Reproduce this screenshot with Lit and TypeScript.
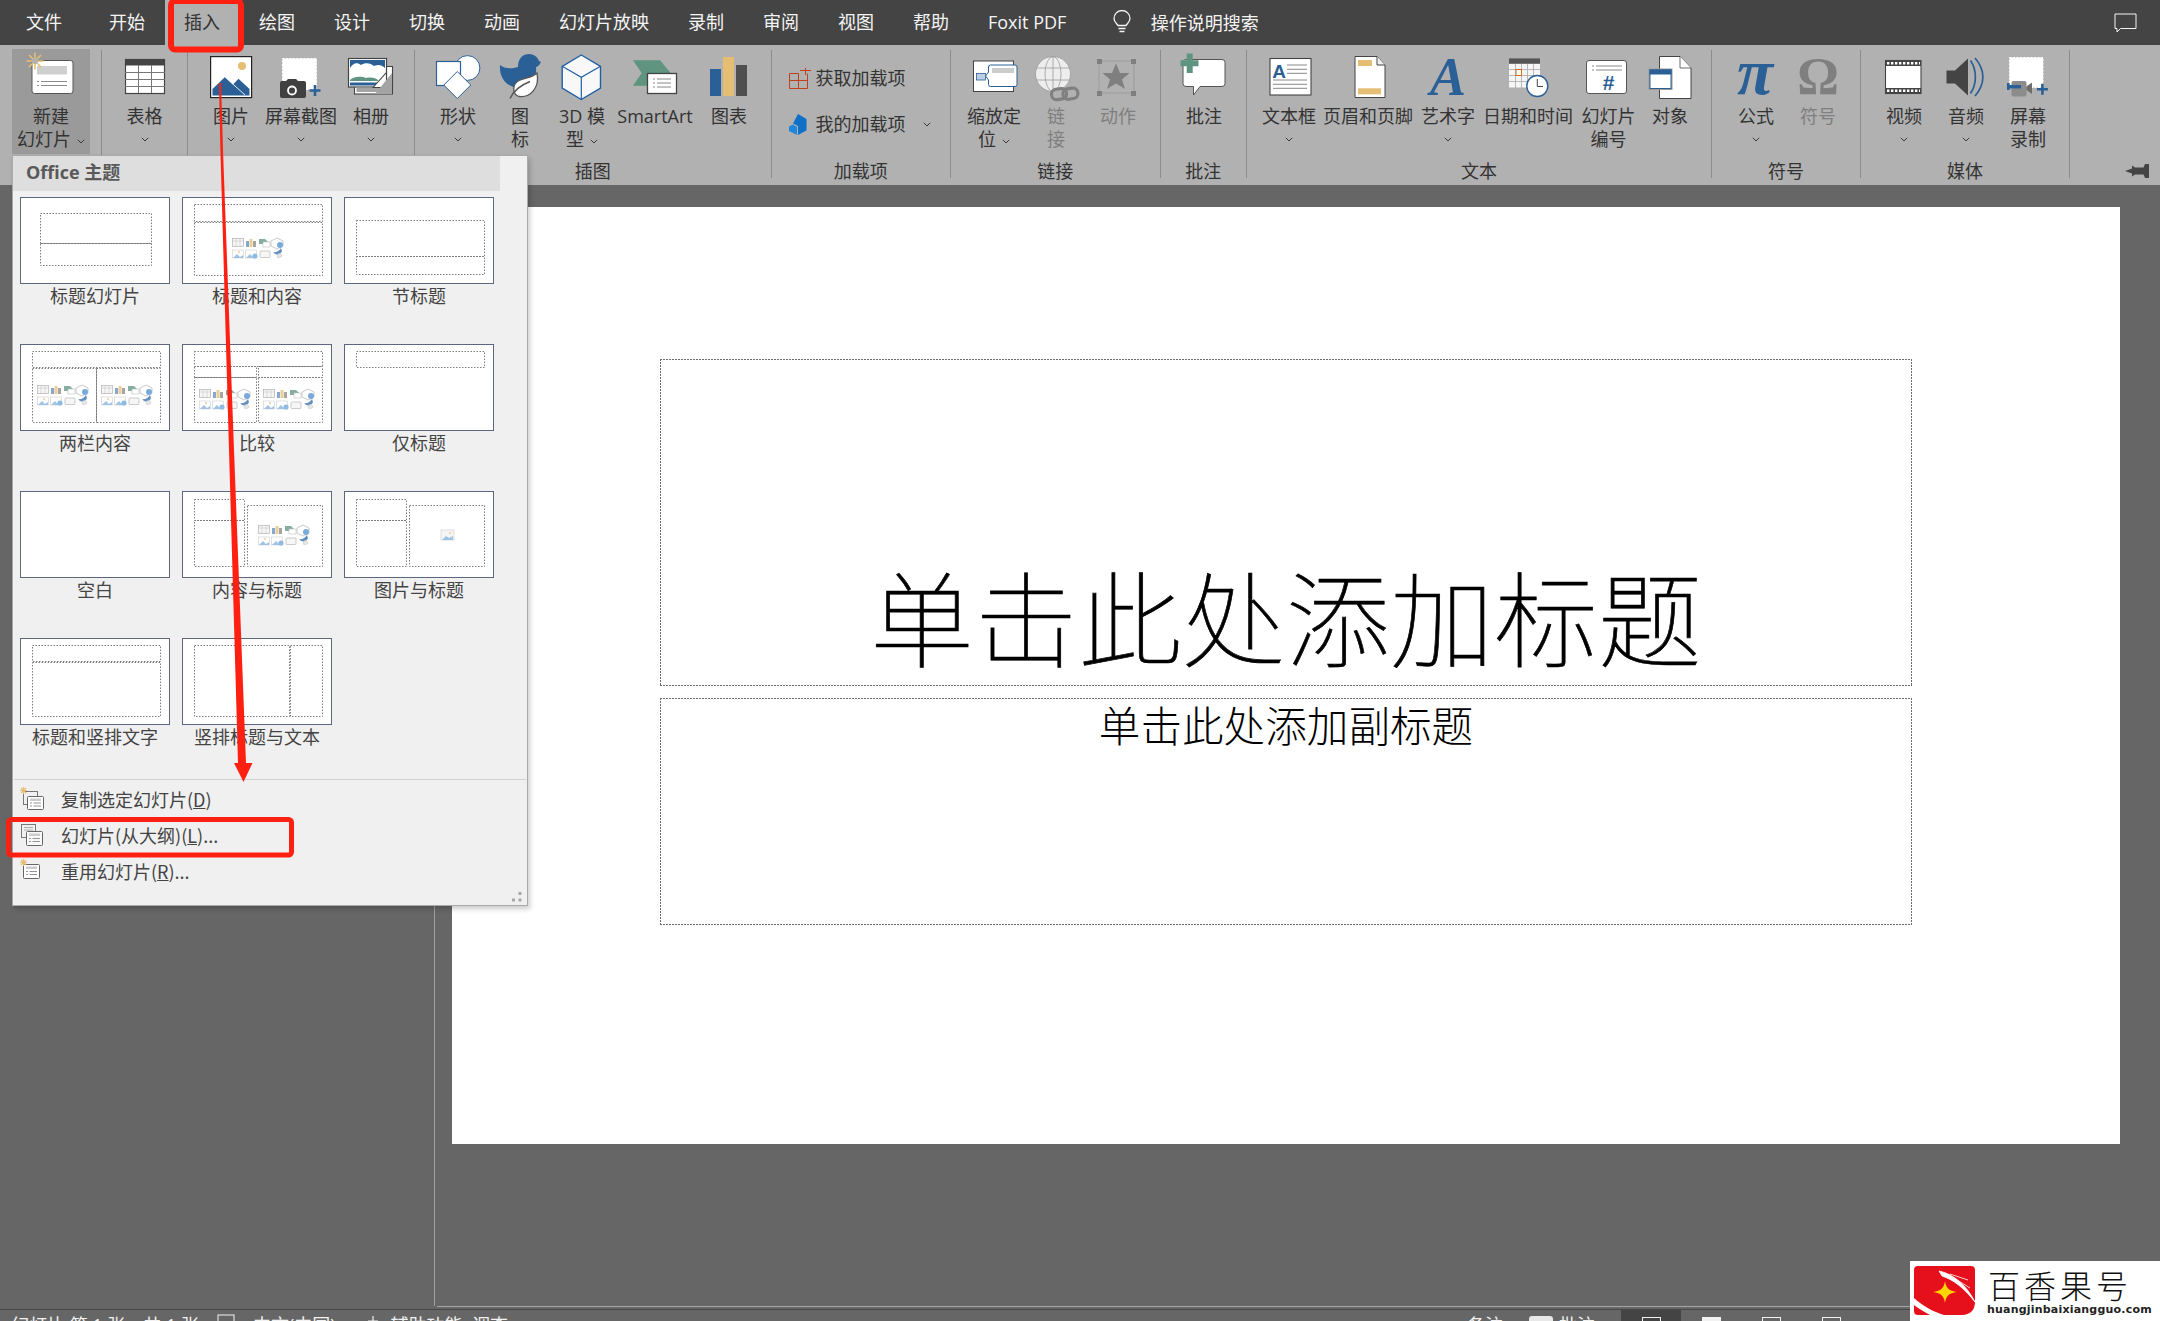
import { LitElement, css, html, svg } from 'lit';
import { customElement } from 'lit/decorators.js';

const BLUE = '#2b6096';
const YEL = '#e5bd73';
const GREEN = '#5e9480';
const DK = '#444';

const sun = (cx: number, cy: number, r: number) => svg`
  <g stroke=${YEL} stroke-width="1.6">
    <path d="M${cx - r} ${cy}H${cx + r}M${cx} ${cy - r}V${cy + r}M${cx - r * 0.7} ${cy - r * 0.7}L${cx + r * 0.7} ${cy + r * 0.7}M${cx - r * 0.7} ${cy + r * 0.7}L${cx + r * 0.7} ${cy - r * 0.7}"></path>
  </g>
  <circle cx=${cx} cy=${cy} r=${r * 0.35} fill="#b1b1b1"></circle>`;

const plus = (cx: number, cy: number) => svg`<path d="M${cx - 5.5} ${cy}H${cx + 5.5}M${cx} ${cy - 5.5}V${cy + 5.5}" stroke=${BLUE} stroke-width="2.6"></path>`;

// all ribbon icons are drawn in page coordinates, the viewBox of each item does the rest
const icons: Record<string, unknown> = {
  newslide: svg`
    <rect x="32" y="60.5" width="41" height="33" rx="2.5" fill="#fff" stroke="#555" stroke-width="1"></rect>
    <rect x="37" y="66" width="30" height="8.5" fill="#cfcfcf"></rect>
    <path d="M37 81.5h2M41 81.5h26M37 85.5h2M41 85.5h26" stroke="#8a8a8a" stroke-width="1"></path>
    ${sun(35, 61, 8.5)}`,
  table: svg`
    <rect x="125.5" y="59.5" width="39" height="34" fill="#fff" stroke=${DK} stroke-width="1.2"></rect>
    <rect x="125" y="59" width="40" height="6.5" fill=${DK}></rect>
    <path d="M138.5 65v28M151.5 65v28M125 72.5h40M125 79.5h40M125 86.5h40" stroke="#777" stroke-width="1"></path>`,
  picture: svg`
    <rect x="210.6" y="56.6" width="41" height="41" fill="#fff" stroke="#222" stroke-width="1.2"></rect>
    <circle cx="242" cy="66" r="4" fill=${YEL}></circle>
    <path d="M212.5 95.5V89L225 77L233 84.5L238.5 78.7L249.5 89V95.5Z" fill=${BLUE}></path>
    <path d="M225 77L245 95" stroke="#fff" stroke-width="0.9"></path>`,
  screenshot: svg`
    <rect x="282.5" y="58.5" width="34" height="31" fill="#fff" stroke="#fff" stroke-dasharray="2 1.5"></rect>
    <path d="M280 83a2 2 0 0 1 2-2h4l2-2h8l2 2h6a2 2 0 0 1 2 2v13a2 2 0 0 1-2 2h-22a2 2 0 0 1-2-2Z" fill="#404040"></path>
    <circle cx="292" cy="90.5" r="4" fill="none" stroke="#fff" stroke-width="1.8"></circle>
    ${plus(315, 90.5)}`,
  album: svg`
    <rect x="355.5" y="66.5" width="38" height="27.5" fill="#fff" stroke=${DK} stroke-width="1.1"></rect>
    <rect x="357.5" y="88" width="34" height="4" fill="#a4a4a4"></rect>
    <rect x="349.5" y="58.5" width="38" height="28.5" fill="#fff" stroke=${DK} stroke-width="1.2"></rect>
    <rect x="351" y="60" width="35" height="11" fill=${BLUE}></rect>
    <path d="M351 68c3-5 7-6 11-3 4-3 10-2 13 1 4-2 8-1 11 2v7H351Z" fill="#fff"></path>
    <path d="M351 80c4-4 12-4 16-2 5-1 10 0 12 2v1H351Z" fill=${GREEN}></path>
    <rect x="351" y="82.5" width="30" height="3" fill=${BLUE}></rect>
    <path d="M374 87.5L387.5 72.5V87.5Z" fill="#fff" stroke=${DK} stroke-width="1.1"></path>
    <path d="M376 94l17-21v21Z" fill="#a4a4a4"></path>`,
  shapes: svg`
    <circle cx="467.5" cy="68" r="12.4" fill="#fff" stroke=${BLUE} stroke-width="1"></circle>
    <rect x="436.5" y="61.5" width="24" height="24" fill="#fff" stroke=${BLUE} stroke-width="1.2"></rect>
    <path d="M457.3 71.5L470.8 85L457.3 98.5L443.8 85Z" fill="#fff" stroke=${BLUE} stroke-width="1"></path>`,
  iconsym: svg`
    <path d="M500 65C505 69 511 69 518 67C518 58 523 54 529 54C535 54 538 58 539 61L541 62C539 66 537 67 536 67C537 76 533 88 520 88C507 88 499 78 500 65Z" fill=${BLUE}></path>
    <path d="M537 73C540 88 530 98 519 96.5C512 94 512 84 519 80.5C525 77.5 532 78 537 73Z" fill="#fff" stroke="#555" stroke-width="1.3"></path>
    <path d="M510 98.5C514 90 521 85 530 81.5" fill="none" stroke="#555" stroke-width="1.4"></path>`,
  model: svg`
    <path d="M581.3 55L600.5 66.3V88L581.3 99.5L562.2 88V66.3Z" fill="#f8f8f8" stroke="#1f5fa5" stroke-width="1.4"></path>
    <path d="M562.2 66.3L581.3 77.3L600.5 66.3M581.3 77.3V99.5" fill="none" stroke="#1f5fa5" stroke-width="1.2"></path>`,
  smartart: svg`
    <path d="M633 60.3H660L670.7 73L660 85.7H633L641.7 73Z" fill=${GREEN}></path>
    <rect x="647.5" y="73.5" width="29" height="20" fill="#fff" stroke=${DK} stroke-width="1.3"></rect>
    <path d="M653 79h2M657 79h14M653 83h2M657 83h14M653 87h2M657 87h14" stroke="#888" stroke-width="1"></path>`,
  chart: svg`
    <rect x="710" y="69" width="11" height="27" fill=${BLUE}></rect>
    <rect x="723" y="57" width="11" height="39" fill=${YEL}></rect>
    <rect x="736" y="65" width="11" height="31" fill="#4f4f4f"></rect>`,
  zoom: svg`
    <rect x="973.5" y="61" width="40" height="30.5" fill="#fff" stroke=${DK} stroke-width="1"></rect>
    <path d="M988.5 72V67a2 2 0 0 1 2-2H1015a2 2 0 0 1 2 2V84.5a2 2 0 0 1-2 2H990.5a2 2 0 0 1-2-2V80L985.5 76Z" fill="#fff" stroke=${BLUE} stroke-width="1"></path>
    <rect x="992" y="68" width="22" height="5" fill="#ccc"></rect>
    <rect x="976.5" y="73.5" width="9" height="6.5" fill="#bcd0e5" stroke=${BLUE} stroke-width="0.8"></rect>`,
  link: svg`
    <circle cx="1053" cy="74" r="17.5" fill="#ededed" stroke="#9a9a9a" stroke-width="0.8"></circle>
    <ellipse cx="1053" cy="74" rx="8" ry="17.5" fill="none" stroke="#9a9a9a" stroke-width="0.8"></ellipse>
    <path d="M1053 56.5v35M1036 68h34M1036 80h34" stroke="#9a9a9a" stroke-width="0.8"></path>
    <g fill="none" stroke="#808080" stroke-width="3.2">
      <rect x="1051.5" y="89" width="15" height="10.5" rx="5" transform="rotate(-8 1058 94)"></rect>
      <rect x="1063" y="88.5" width="15" height="10.5" rx="5" transform="rotate(-8 1070 94)"></rect>
    </g>`,
  action: svg`
    <rect x="1099" y="61" width="35" height="32" fill="none" stroke="#979797" stroke-width="0.8"></rect>
    <path d="M1097 59h5v5h-5ZM1131 59h5v5h-5ZM1097 91h5v5h-5ZM1131 91h5v5h-5Z" fill="#7f7f7f"></path>
    <path d="M1116 63.5L1120 73H1129.5L1122 79.5L1125 89L1116 83.5L1107 89L1110 79.5L1102.5 73H1112Z" fill="#7f7f7f"></path>`,
  comment: svg`
    <path d="M1187 59.5H1222a3 3 0 0 1 3 3V83.5a3 3 0 0 1-3 3H1200L1193.5 95V86.5H1186a3 3 0 0 1-3-3V62.5a3 3 0 0 1 3-3Z" fill="#fff" stroke="#555" stroke-width="1"></path>
    <path d="M1180.5 63.3H1198.5M1189.7 53.5V73" stroke=${GREEN} stroke-width="6"></path>`,
  textbox: svg`
    <rect x="1270" y="58.5" width="41" height="36.5" fill="#fff" stroke=${DK} stroke-width="1.1"></rect>
    <text x="1279" y="78" text-anchor="middle" font-family="Liberation Sans" font-weight="700" font-size="19" fill=${BLUE}>A</text>
    <path d="M1287 65h20M1287 69.3h20M1287 73.3h20M1273 80h34M1273 84.3h34M1273 88.3h34" stroke="#888" stroke-width="1"></path>`,
  header: svg`
    <path d="M1355 56.5H1377L1385 65V97.5H1355Z" fill="#fff" stroke=${DK} stroke-width="1"></path>
    <path d="M1377 56.5V65H1385" fill="#eee" stroke=${DK} stroke-width="1"></path>
    <rect x="1358" y="60" width="14" height="6" fill=${YEL}></rect>
    <rect x="1358" y="88.3" width="23" height="6" fill=${YEL}></rect>`,
  wordart: svg`<text x="1448" y="95" text-anchor="middle" font-family="Liberation Serif" font-style="italic" font-weight="700" font-size="54" fill=${BLUE}>A</text>`,
  date: svg`
    <rect x="1509" y="58.5" width="31" height="29" fill="#f6f6f6"></rect>
    <rect x="1509" y="58.3" width="31" height="5.5" fill="#555"></rect>
    <path d="M1515.5 64v24M1521.5 64v24M1527.5 64v24M1533.5 64v24M1509 69.5h31M1509 75.5h31M1509 81.5h31" stroke="#aaa" stroke-width="0.8"></path>
    <rect x="1516" y="69.5" width="5.5" height="6" fill="#fff" stroke="#d0701f" stroke-width="1"></rect>
    <circle cx="1537.3" cy="86" r="10.5" fill="#fff" stroke=${BLUE} stroke-width="1.4"></circle>
    <path d="M1537.3 79V86.5H1543" fill="none" stroke="#444" stroke-width="1"></path>`,
  number: svg`
    <rect x="1586.5" y="60.5" width="40" height="33" rx="2.5" fill="#fff" stroke="#555" stroke-width="1"></rect>
    <path d="M1592 66h2M1596 66h26M1592 70h2M1596 70h26" stroke="#888" stroke-width="1"></path>
    <text x="1608.5" y="90" text-anchor="middle" font-family="Liberation Sans" font-weight="700" font-size="21" fill=${BLUE}>#</text>`,
  object: svg`
    <path d="M1659.5 56.5H1680L1691 68V98.5H1659.5Z" fill="#fff" stroke=${DK} stroke-width="1"></path>
    <path d="M1680 56.5V68H1691" fill="#fff" stroke=${DK} stroke-width="0.8"></path>
    <rect x="1648.5" y="68.5" width="24" height="21.5" fill="#9a9a9a"></rect>
    <rect x="1650" y="70" width="21" height="18.5" fill="#fff" stroke=${BLUE} stroke-width="1"></rect>
    <rect x="1649.5" y="69.5" width="22" height="5" fill=${BLUE}></rect>`,
  pi: svg`<text x="1755" y="94" text-anchor="middle" font-family="Liberation Serif" font-style="italic" font-weight="700" font-size="66" fill=${BLUE}>π</text>`,
  omega: svg`<text x="1818" y="94" text-anchor="middle" font-family="Liberation Serif" font-weight="700" font-size="52" fill="#7f7f7f">Ω</text>`,
  video: svg`
    <rect x="1885.5" y="60.5" width="35.5" height="33" fill="#fff" stroke=${DK} stroke-width="1.1"></rect>
    <rect x="1885.5" y="60.5" width="35.5" height="5.5" fill=${DK}></rect>
    <rect x="1885.5" y="88" width="35.5" height="5.5" fill=${DK}></rect>
    <path d="M1887 63.2H1920M1887 90.8H1920" stroke="#fff" stroke-width="2.6" stroke-dasharray="2.4 1.6"></path>`,
  audio: svg`
    <path d="M1946.5 70.5H1955L1968 58.5V95.5L1955 83.5H1946.5Z" fill=${DK}></path>
    <path d="M1970.5 60.5C1977 70 1977 84 1970.5 93.5M1975 58C1985.5 70 1985.5 84 1975 96" fill="none" stroke=${BLUE} stroke-width="1.7"></path>`,
  record: svg`
    <rect x="2009.5" y="57.5" width="33.5" height="30" fill="#fff" stroke="#fff" stroke-dasharray="2 1.5"></rect>
    <rect x="2011.5" y="81" width="15" height="15.5" rx="2" fill="#8c8c8c"></rect>
    <path d="M2026.5 86.5L2032 82.5V94L2026.5 90Z" fill="#6c6c6c"></path>
    <rect x="2009" y="85" width="12" height="3.4" fill=${BLUE}></rect>
    <rect x="2007" y="83" width="2.6" height="7" fill=${BLUE}></rect>
    ${plus(2042.4, 89.3)}`,
};

interface Item { x: number; w: number; icon: string; lines: string[]; chev?: 'block' | 'inline'; off?: boolean; cur?: boolean; }
interface Group { x: number; end: number; label?: string; items?: Item[]; addins?: boolean; }

const groups: Group[] = [
  { x: 0, end: 102, items: [{ x: 12, w: 78, icon: 'newslide', lines: ['新建', '幻灯片'], chev: 'inline', cur: true }] },
  { x: 102, end: 187.5, items: [{ x: 102, w: 85, icon: 'table', lines: ['表格'], chev: 'block' }] },
  {
    x: 187.5, end: 415, items: [
      { x: 196, w: 70, icon: 'picture', lines: ['图片'], chev: 'block' },
      { x: 266, w: 70, icon: 'screenshot', lines: ['屏幕截图'], chev: 'block' },
      { x: 337, w: 70, icon: 'album', lines: ['相册'], chev: 'block' },
    ],
  },
  {
    x: 415, end: 771.5, label: '插图', items: [
      { x: 427, w: 62, icon: 'shapes', lines: ['形状'], chev: 'block' },
      { x: 489, w: 62, icon: 'iconsym', lines: ['图', '标'] },
      { x: 551, w: 62, icon: 'model', lines: ['3D 模', '型'], chev: 'inline' },
      { x: 613, w: 84, icon: 'smartart', lines: ['SmartArt'] },
      { x: 697, w: 64, icon: 'chart', lines: ['图表'] },
    ],
  },
  { x: 771.5, end: 951, label: '加载项', addins: true },
  {
    x: 951, end: 1160.5, label: '链接', items: [
      { x: 958, w: 72, icon: 'zoom', lines: ['缩放定', '位'], chev: 'inline' },
      { x: 1030, w: 52, icon: 'link', lines: ['链', '接'], off: true },
      { x: 1082, w: 72, icon: 'action', lines: ['动作'], off: true },
    ],
  },
  { x: 1160.5, end: 1247, label: '批注', items: [{ x: 1161, w: 86, icon: 'comment', lines: ['批注'] }] },
  {
    x: 1247, end: 1712, label: '文本', items: [
      { x: 1255, w: 68, icon: 'textbox', lines: ['文本框'], chev: 'block' },
      { x: 1323, w: 90, icon: 'header', lines: ['页眉和页脚'] },
      { x: 1413, w: 70, icon: 'wordart', lines: ['艺术字'], chev: 'block' },
      { x: 1483, w: 90, icon: 'date', lines: ['日期和时间'] },
      { x: 1573, w: 71, icon: 'number', lines: ['幻灯片', '编号'] },
      { x: 1644, w: 52, icon: 'object', lines: ['对象'] },
    ],
  },
  {
    x: 1712, end: 1861, label: '符号', items: [
      { x: 1725, w: 62, icon: 'pi', lines: ['公式'], chev: 'block' },
      { x: 1787, w: 62, icon: 'omega', lines: ['符号'], off: true },
    ],
  },
  {
    x: 1861, end: 2070, label: '媒体', items: [
      { x: 1873, w: 62, icon: 'video', lines: ['视频'], chev: 'block' },
      { x: 1935, w: 62, icon: 'audio', lines: ['音频'], chev: 'block' },
      { x: 1997, w: 62, icon: 'record', lines: ['屏幕', '录制'] },
    ],
  },
];

const tabs = ['文件', '开始', '插入', '绘图', '设计', '切换', '动画', '幻灯片放映', '录制', '审阅', '视图', '帮助', 'Foxit PDF'];

// faded miniature of the content placeholder icons
const cluster = (x: number, y: number) => svg`
  <g transform="translate(${x} ${y})" opacity="0.75">
    <rect x="0.5" y="0.5" width="11" height="8" fill="#f4f4f4" stroke="#999" stroke-width="0.7"></rect>
    <path d="M0 3H12M4 1V9M8 1V9" stroke="#aaa" stroke-width="0.5"></path>
    <rect x="14" y="3" width="3" height="6" fill="#5b8cc0"></rect>
    <rect x="17.5" y="1" width="3" height="8" fill=${YEL}></rect>
    <rect x="21" y="3" width="3" height="6" fill="#888"></rect>
    <path d="M27 1H33L36 4L33 6H27Z" fill=${GREEN}></path>
    <rect x="31" y="4" width="7" height="5" fill="#fff" stroke="#aaa" stroke-width="0.6"></rect>
    <path d="M45 0L51 3V8L45 11L39 8V3Z" fill="#fff" stroke="#999" stroke-width="0.7"></path>
    <rect x="0.5" y="12" width="11" height="8" fill="#fff" stroke="#bbb" stroke-width="0.6"></rect>
    <path d="M1 20L5 16L8 19L11 17V20Z" fill="#7fb0dc"></path>
    <circle cx="7" cy="14" r="1" fill=${YEL}></circle>
    <rect x="13.5" y="12" width="11" height="8" fill="#fff" stroke="#bbb" stroke-width="0.6"></rect>
    <path d="M14 20L18 16L21 19L24 17V20Z" fill="#7fb0dc"></path>
    <circle cx="23" cy="18" r="2.6" fill="#6ba3d8"></circle>
    <rect x="28" y="13" width="10" height="6.5" rx="1" fill="#f4f4f4" stroke="#aaa" stroke-width="0.8"></rect>
    <circle cx="48" cy="7" r="3" fill="#4c90d0"></circle>
    <path d="M41 14C44 15 47 13 49 10L50 13C49 16 46 17 43 16Z" fill="#2f6cab"></path>
    <path d="M46 16C48 15 50 16 50 18C49 20 46 20 45 19Z" fill="#ddd" stroke="#aaa" stroke-width="0.4"></path>
  </g>`;

const ph = (x: number, y: number, w: number, h: number) => svg`<rect x=${x + 0.5} y=${y + 0.5} width=${w} height=${h} fill="none" stroke="#7c7c7c" stroke-width="1" stroke-dasharray="1.5 1.5"></rect>`;

const layouts = [
  { name: '标题幻灯片', art: svg`${ph(19, 15, 111, 30)}${ph(19, 45, 111, 22)}` },
  { name: '标题和内容', art: svg`${ph(11, 6, 128, 17)}${ph(11, 24, 128, 53)}${cluster(49, 40)}` },
  { name: '节标题', art: svg`${ph(11, 22, 128, 36)}${ph(11, 58, 128, 18)}` },
  { name: '两栏内容', art: svg`${ph(11, 6, 128, 16)}${ph(11, 23, 64, 54)}${ph(75, 23, 64, 54)}${cluster(16, 40)}${cluster(80, 40)}` },
  { name: '比较', art: svg`${ph(11, 6, 128, 15)}${ph(11, 21, 62, 11)}${ph(75, 21, 64, 11)}${ph(11, 32, 62, 45)}${ph(75, 32, 64, 45)}${cluster(16, 44)}${cluster(80, 44)}` },
  { name: '仅标题', art: svg`${ph(11, 6, 128, 16)}` },
  { name: '空白', art: svg`` },
  { name: '内容与标题', art: svg`${ph(11, 7, 50, 21)}${ph(11, 28, 50, 46)}${ph(64, 13, 75, 61)}${cluster(75, 33)}` },
  {
    name: '图片与标题', art: svg`${ph(11, 7, 50, 21)}${ph(11, 28, 50, 46)}${ph(64, 13, 75, 61)}
      <g opacity="0.75"><rect x="96" y="38" width="13" height="10" fill="#f2f2f2" stroke="#bbb" stroke-width="0.6"></rect><path d="M97 48L101 44L104 46L108 44V48Z" fill="#7fb0dc"></path><circle cx="105" cy="41" r="1" fill=${YEL}></circle></g>`,
  },
  { name: '标题和竖排文字', art: svg`${ph(11, 6, 128, 16)}${ph(11, 23, 128, 54)}` },
  { name: '竖排标题与文本', art: svg`${ph(11, 6, 95, 71)}${ph(107, 6, 32, 71)}` },
];

const chev = html`<svg class="chev" width="8" height="5" viewBox="0 0 8 5"><path d="M0.8 0.8L4 4L7.2 0.8" fill="none" stroke="#3a3a3a" stroke-width="1"></path></svg>`;

const cardLines = (x: number, y: number, w: number) => svg`<path d="M${x} ${y}h2M${x + 3.5} ${y}H${x + w}M${x} ${y + 3}h2M${x + 3.5} ${y + 3}H${x + w}" stroke="#888" stroke-width="0.9"></path>`;

const menuCmds = [
  {
    text: '复制选定幻灯片(', key: 'D', tail: ')', icon: svg`
      <rect x="3.5" y="4.5" width="14" height="13" fill="#f0f0f0" stroke="#777"></rect>
      <rect x="7.5" y="9.5" width="16" height="13" rx="1" fill="#fff" stroke="#666"></rect>
      <rect x="10" y="11.5" width="11" height="2.5" fill="#ccc"></rect>${cardLines(10, 16, 11)}
      <path d="M0 3.5H7M3.5 0V7M1 1L6 6M1 6L6 1" stroke=${YEL} stroke-width="1.1"></path>`,
  },
  {
    text: '幻灯片(从大纲)(', key: 'L', tail: ')...', icon: svg`
      <rect x="1.5" y="1.5" width="14" height="13" fill="#f0f0f0" stroke="#777"></rect>
      <path d="M4 4.5h9M4 7h9" stroke="#999" stroke-width="0.8"></path>
      <rect x="6.5" y="8.5" width="16" height="14" rx="1" fill="#f8f8f8" stroke="#666"></rect>
      <rect x="9" y="10.5" width="11" height="2.5" fill="#ccc"></rect>${cardLines(9, 15.5, 11)}`,
  },
  {
    text: '重用幻灯片(', key: 'R', tail: ')...', icon: svg`
      <rect x="3.5" y="5.5" width="16" height="14" rx="1" fill="#fff" stroke="#666"></rect>
      <rect x="6" y="7.5" width="11" height="2.5" fill="#ccc"></rect>${cardLines(6, 12.5, 11)}
      <path d="M0 3.5H7M3.5 0V7M1 1L6 6M1 6L6 1" stroke=${YEL} stroke-width="1.1"></path>`,
  },
];

@customElement('app-root')
export class AppRoot extends LitElement {
  static styles = css`
    :host {
      display: block;
      font-family: "Open Sans", "Noto Sans CJK SC", sans-serif;
    }
    .app {
      position: relative;
      display: flex;
      flex-direction: column;
      height: 1321px;
      overflow: hidden;
      background: #666;
    }
    .titlebar {
      display: flex;
      align-items: stretch;
      height: 45px;
      flex: none;
      padding-left: 6.5px;
      background: #444;
      color: #f4f4f4;
      font-size: 18px;
    }
    .tab {
      display: flex;
      align-items: center;
      padding: 0 19.5px 2px;
      white-space: nowrap;
      line-height: 42px;
    }
    .tab:first-child {
      margin-right: 8px;
    }
    .tab.on {
      background: #b1b1b1;
      color: #333;
    }
    .search {
      display: flex;
      align-items: center;
      gap: 19px;
      margin-left: 26px;
      padding-bottom: 2px;
    }
    .fb {
      margin-left: auto;
      margin-right: 23px;
      align-self: center;
    }
    .ribbon {
      display: flex;
      flex: none;
      position: relative;
      height: 135px;
      padding-top: 5px;
      background: #b1b1b1;
      color: #333;
      font-size: 18px;
      line-height: 23px;
    }
    .group {
      position: relative;
      flex: none;
      box-sizing: border-box;
      display: flex;
      flex-direction: column;
      height: 128px;
      border-right: 1px solid #8b8b8b;
    }
    .items {
      display: flex;
      height: 110.5px;
      margin-top: -1px;
      flex: none;
    }
    .glabel {
      text-align: center;
      white-space: nowrap;
    }
    .item {
      flex: none;
      display: flex;
      flex-direction: column;
      align-items: center;
      height: 105px;
      padding-top: 3px;
      box-sizing: border-box;
      white-space: nowrap;
    }
    .item.cur {
      background: #9a9a9a;
    }
    .item.off {
      color: #7f7f7f;
    }
    .item svg.ic {
      display: block;
      height: 50px;
      overflow: visible;
      margin-bottom: 2.5px;
    }
    .chev {
      display: inline-block;
    }
    .line .chev {
      margin-left: 6px;
      vertical-align: 2px;
    }
    .chevrow {
      display: flex;
      align-items: center;
      height: 23px;
    }
    .addins {
      display: flex;
      flex-direction: column;
      gap: 23px;
      padding: 18px 0 0 16px;
    }
    .addin {
      display: flex;
      align-items: center;
      gap: 4px;
      height: 23px;
    }
    .addin .chev {
      margin-left: 13px;
    }
    .pin {
      position: absolute;
      right: 11px;
      bottom: 7px;
    }
    .main {
      flex: 1;
      display: flex;
      min-height: 0;
    }
    .thumbs {
      flex: none;
      width: 434px;
      border-right: 1px solid #a0a0a0;
      margin-bottom: 3px;
    }
    .editor {
      flex: 1;
      box-sizing: border-box;
      margin: 0 0 2px 2px;
      padding: 22px 0 0 15px;
      border-bottom: 1px solid #a6a6a6;
    }
    .slide {
      box-sizing: border-box;
      display: flex;
      flex-direction: column;
      align-items: center;
      width: 1668px;
      height: 937px;
      padding-top: 152px;
      background: #fff;
      color: #000;
      font-family: "Noto Sans CJK SC", sans-serif;
    }
    .ptitle, .psub {
      background:
        linear-gradient(90deg, #6c6c6c 2px, transparent 0) 0 0 / 3px 1px repeat-x,
        linear-gradient(90deg, #6c6c6c 2px, transparent 0) 0 100% / 3px 1px repeat-x,
        linear-gradient(#6c6c6c 2px, transparent 0) 0 0 / 1px 3px repeat-y,
        linear-gradient(#6c6c6c 2px, transparent 0) 100% 0 / 1px 3px repeat-y;
    }
    .ptitle {
      box-sizing: border-box;
      display: flex;
      justify-content: center;
      align-items: flex-end;
      width: 1252px;
      height: 327px;
      padding-bottom: 19px;
      font-size: 104px;
      line-height: 104px;
      font-weight: 100;
      -webkit-text-stroke: 0.7px #000;
    }
    .psub {
      box-sizing: border-box;
      width: 1252px;
      height: 227px;
      margin-top: 12px;
      padding-top: 1px;
      text-align: center;
      font-size: 41.6px;
      line-height: 50px;
      font-weight: 300;
    }
    .status {
      position: relative;
      flex: none;
      display: flex;
      height: 11px;
      border-top: 1px solid #474747;
      color: #f2f2f2;
      font-size: 18px;
      line-height: 23px;
      white-space: nowrap;
    }
    .sleft {
      display: flex;
      align-items: flex-start;
      gap: 18px;
      padding: 4px 0 0 11px;
    }
    .access {
      margin: 1px -7px 0 12px;
    }
    .sright {
      display: flex;
      align-items: flex-start;
      margin-left: auto;
      margin-right: 299px;
    }
    .snote {
      display: flex;
      gap: 6px;
      padding-top: 4px;
      margin-right: 26px;
    }
    .view {
      width: 60px;
      display: flex;
      justify-content: center;
      padding-top: 7px;
      height: 11px;
    }
    .view.on {
      background: #444;
    }
    .menu {
      position: absolute;
      left: 12px;
      top: 155px;
      box-sizing: border-box;
      width: 515.5px;
      height: 751px;
      background: #f0f0f0;
      border: 1px solid #a9a9a9;
      box-shadow: 2px 3px 5px rgba(0, 0, 0, 0.2);
      color: #444;
      font-size: 18px;
      font-family: "Noto Sans CJK SC", sans-serif;
    }
    .mhead {
      width: 487px;
      height: 35px;
      box-sizing: border-box;
      padding-left: 13px;
      background: #dedede;
      color: #595959;
      font-weight: 700;
      line-height: 33px;
      font-family: "Open Sans", "Noto Sans CJK SC", sans-serif;
    }
    .lgrid {
      display: grid;
      grid-template-columns: repeat(3, 150px);
      grid-template-rows: repeat(3, 147px) 141px;
      column-gap: 12px;
      padding: 6px 0 0 7px;
    }
    .layout {
      text-align: center;
      line-height: 23px;
    }
    .thumb {
      display: block;
      width: 150px;
      height: 87px;
      box-sizing: border-box;
      background: #fff;
      border: 1.3px solid #5b6680;
    }
    .msep {
      height: 1px;
      margin: 0 1px;
      background: #cfcfcf;
    }
    .cmds {
      padding-top: 0.5px;
    }
    .cmd {
      display: flex;
      align-items: center;
      gap: 16px;
      height: 36.3px;
      padding-left: 7px;
    }
    .grip {
      position: absolute;
      right: 5px;
      bottom: 3px;
    }
    .overlay {
      position: absolute;
      left: 0;
      top: 0;
      width: 2160px;
      height: 1321px;
      pointer-events: none;
    }
    .mark {
      position: absolute;
      right: 0;
      bottom: 0;
      display: flex;
      width: 250px;
      height: 60px;
      background: #fff;
      color: #111;
    }
    .mark svg {
      flex: none;
      margin: 5px 0 0 4px;
    }
    .mtext {
      display: flex;
      flex-direction: column;
      margin-left: 11px;
      font-family: "Noto Sans CJK SC", sans-serif;
    }
    .mname {
      font-size: 32px;
      line-height: 36px;
      letter-spacing: 4px;
      margin: 5px 0 0 1px;
      font-weight: 300;
    }
    .murl {
      font-family: "DejaVu Sans", sans-serif;
      font-size: 11px;
      font-weight: 700;
      line-height: 13px;
      letter-spacing: 0.2px;
      margin-top: 1px;
      color: #222;
    }
  `;

  renderItem(it: Item) {
    return html`<div class="item ${it.off ? 'off' : ''} ${it.cur ? 'cur' : ''}" style="width:${it.w}px">
      <svg class="ic" width=${it.w} height="50" viewBox="${it.x} 52 ${it.w} 50">${icons[it.icon]}</svg>
      ${it.lines.map((l, i) => html`<div class="line">${l}${it.chev === 'inline' && i === it.lines.length - 1 ? chev : ''}</div>`)}
      ${it.chev === 'block' ? html`<div class="chevrow">${chev}</div>` : ''}
    </div>`;
  }

  renderAddins() {
    return html`<div class="addins">
      <div class="addin">
        <svg width="24" height="22" viewBox="0 0 24 22">
          <path d="M19.5 5.5V20.5H1.5V5.5H10.5M10.5 5.5V20.5M1.5 12.5H19.5" fill="none" stroke="#c0401c" stroke-width="1"></path>
          <path d="M12 2.5H23M17.5 -1V7" stroke="#c0401c" stroke-width="1" fill="none"></path>
        </svg>
        <span>获取加载项</span>
      </div>
      <div class="addin">
        <svg width="24" height="22" viewBox="0 0 24 22">
          <path d="M10 0L18.5 5V16.5L10 21V12L5 9.5Z" fill="#0f70c8"></path>
          <path d="M5 10.5L9 13V21L5 19L1 17V12.5Z" fill="#1f86dc"></path>
        </svg>
        <span>我的加载项</span>${chev}
      </div>
    </div>`;
  }

  render() {
    return html`<div class="app">
      <div class="titlebar">
        ${tabs.map((t) => html`<div class="tab ${t === '插入' ? 'on' : ''}">${t}</div>`)}
        <div class="search">
          <svg width="20" height="24" viewBox="0 0 20 24">
            <path d="M6 15.5C4 13 2 11.5 2 8.5a8 8 0 0 1 16 0c0 3-2 4.5-4 7Z" fill="none" stroke="#f4f4f4" stroke-width="1.3"></path>
            <path d="M6.5 18.5h7M7.5 21.5h5" stroke="#f4f4f4" stroke-width="1.6"></path>
          </svg>
          <span>操作说明搜索</span>
        </div>
        <svg class="fb" width="23" height="20" viewBox="0 0 23 20">
          <path d="M1 1H22V15.5H6.5L3 19V15.5H1Z" fill="none" stroke="#f4f4f4" stroke-width="1"></path>
        </svg>
      </div>

      <div class="ribbon">
        ${groups.map((g) => html`<div class="group" style="width:${g.end - g.x}px">
          ${g.items
            ? html`<div class="items" style="padding-left:${g.items[0].x - g.x}px">${g.items.map((it) => this.renderItem(it))}</div>`
            : html`<div class="items">${this.renderAddins()}</div>`}
          ${g.label ? html`<div class="glabel">${g.label}</div>` : ''}
        </div>`)}
        <svg class="pin" width="24" height="14" viewBox="0 0 24 14">
          <path d="M0 7L7 4.5V9.5Z M7 1.5L10 3.5H18.5L20 0H24V14H20L18.5 10.5H10L7 12.5Z" fill="#444"></path>
        </svg>
      </div>

      <div class="main">
        <div class="thumbs"></div>
        <div class="editor">
          <div class="slide">
            <div class="ptitle">单击此处添加标题</div>
            <div class="psub">单击此处添加副标题</div>
          </div>
        </div>
      </div>

      <div class="status">
        <div class="sleft">
          <span>幻灯片 第 1 张，共 1 张</span>
          <svg width="18" height="18" viewBox="0 0 18 18"><rect x="1" y="1" width="16" height="15" fill="none" stroke="#f2f2f2"></rect></svg>
          <span>中文(中国)</span>
          <svg class="access" width="14" height="18" viewBox="0 0 14 18"><path d="M7 1V17M2 6H12" stroke="#f2f2f2" stroke-width="1.2"></path></svg>
          <span>辅助功能: 调查</span>
        </div>
        <div class="sright">
          <div class="snote"><span>备注</span></div>
          <div class="snote">
            <svg width="24" height="18" viewBox="0 0 24 18"><rect x="0" y="2" width="24" height="15" rx="3" fill="#e8e8e8"></rect></svg>
            <span>批注</span>
          </div>
          ${[0, 1, 2, 3].map((v) => html`<div class="view ${v === 0 ? 'on' : ''}">
            <svg width="19" height="6" viewBox="0 0 19 6"><rect x="0.5" y="0.5" width="18" height="8" fill=${v === 1 ? '#f2f2f2' : 'none'} stroke="#f2f2f2"></rect></svg>
          </div>`)}
        </div>
      </div>

      <div class="menu">
        <div class="mhead">Office 主题</div>
        <div class="lgrid">
          ${layouts.map((l) => html`<div class="layout">
            <svg class="thumb" viewBox="0 0 148 85">${l.art}</svg>
            <div>${l.name}</div>
          </div>`)}
        </div>
        <div class="msep"></div>
        <div class="cmds">
          ${menuCmds.map((c) => html`<div class="cmd">
            <svg width="25" height="24" viewBox="0 0 25 24">${c.icon}</svg>
            <span>${c.text}<u>${c.key}</u>${c.tail}</span>
          </div>`)}
        </div>
        <svg class="grip" width="10" height="10" viewBox="0 0 10 10">
          <path d="M6.5 0h3v3h-3ZM6.5 6.5h3v3h-3ZM0 6.5h3v3h-3Z" fill="#a8a8a8"></path>
        </svg>
      </div>

      <svg class="overlay" viewBox="0 0 2160 1321">
        <rect x="171" y="1" width="70" height="48.5" rx="4" fill="none" stroke="#ff2012" stroke-width="6"></rect>
        <rect x="8.5" y="819.5" width="283" height="35.5" rx="3" fill="none" stroke="#ff2012" stroke-width="5"></rect>
        <path d="M219 83L221 83L223 150L234 450L246 763H252.5L243.5 782L234 763H238L229 450L220.4 150Z" fill="#ff2012"></path>
      </svg>

      <div class="mark">
        <svg width="62" height="50" viewBox="0 0 62 50">
          <path d="M4 0H57a4 4 0 0 1 4 4V36C61 44 56 49 48 49H4a4 4 0 0 1-4-4V4a4 4 0 0 1 4-4Z" fill="#e60f1c"></path>
          <path d="M0 32C10 41 20 46 30 49H16C10 46 4 42 0 39Z" fill="#fff"></path>
          <path d="M25 5C40 8 53 20 61 36C50 22 40 14 28 10ZM36 8L54 14M40 12L56 22" fill="#fff" stroke="#fff" stroke-width="0.8"></path>
          <path d="M31 15C32 22 35 25 43 26C35 27 32 30 31 37C30 30 27 27 19 26C27 25 30 22 31 15Z" fill="#ffd400"></path>
        </svg>
        <div class="mtext">
          <div class="mname">百香果号</div>
          <div class="murl">huangjinbaixiangguo.com</div>
        </div>
      </div>
    </div>`;
  }
}
